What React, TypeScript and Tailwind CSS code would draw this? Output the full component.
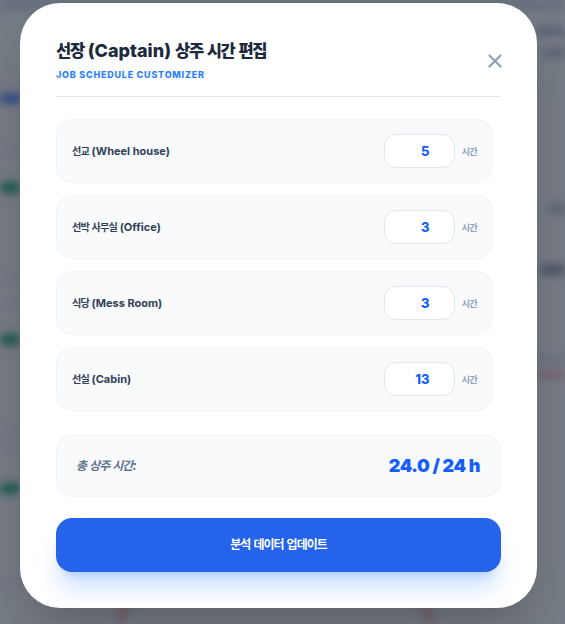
import React from "react";

const HANGUL = /([\uAC00-\uD7A3]+)/;

function Ko({ text }: { text: string }) {
  const parts = text.split(HANGUL);
  return (
    <>
      {parts.map((p, i) =>
        /[\uAC00-\uD7A3]/.test(p) ? (
          <span key={i} className="text-[0.92em] tracking-[-0.08em]">
            {p}
          </span>
        ) : (
          <React.Fragment key={i}>{p}</React.Fragment>
        )
      )}
    </>
  );
}

const rows = [
  { label: "선교 (Wheel house)", value: "5" },
  { label: "선박 사무실 (Office)", value: "3" },
  { label: "식당 (Mess Room)", value: "3" },
  { label: "선실 (Cabin)", value: "13" },
];

function Background() {
  return (
    <div className="h-[624px] w-[565px] overflow-hidden bg-slate-100">
      <div className="flex h-full w-full blur-[5px]">
        <div className="flex w-[30px] flex-col">
          <div className="h-[10px] bg-slate-300" />
          <div className="mt-[85px] h-[7px] w-[22px] rounded bg-blue-600" />
          <div className="mt-[47px] h-px bg-slate-300" />
          <div className="mt-[33px] h-[9px] w-[20px] rounded bg-emerald-600" />
          <div className="mt-[86px] h-px bg-slate-300" />
          <div className="mt-[23px] h-px bg-slate-300" />
          <div className="mt-[32px] h-[9px] w-[20px] rounded bg-emerald-600" />
          <div className="mt-[86px] h-px bg-slate-300" />
          <div className="mt-[17px] h-px bg-slate-300" />
          <div className="mt-[35px] h-[9px] w-[20px] rounded bg-emerald-600" />
          <div className="mt-[88px] h-px bg-slate-300" />
        </div>
        <div className="flex flex-1 flex-col">
          <div className="h-[10px] bg-slate-300" />
          <div className="flex-1" />
          <div className="flex justify-center pr-[18px]">
            <div className="h-[40px] w-[312px] rounded-t-full border-[3px] border-b-0 border-red-400" />
          </div>
        </div>
        <div className="flex w-[28px] flex-col items-end">
          <div className="h-[10px] w-full bg-slate-300" />
          <div className="mt-[18px] h-[6px] w-full bg-slate-400" />
          <div className="mt-[16px] h-[6px] w-[22px] rounded bg-slate-400" />
          <div className="mt-[150px] h-[6px] w-[16px] rounded bg-slate-400" />
          <div className="mt-[54px] h-[7px] w-[24px] rounded bg-slate-500" />
          <div className="mt-[84px] h-[5px] w-full rounded bg-slate-300" />
          <div className="mt-[11px] h-[3px] w-full bg-red-400" />
        </div>
      </div>
    </div>
  );
}

export default function App() {
  return (
    <div className="relative h-[624px] w-[565px] overflow-hidden font-[Inter,'Noto_Sans_CJK_KR',sans-serif]">
      <Background />
      <div className="absolute inset-0 bg-[#111827]/55 pl-[20px] pt-[3px]">
        <div className="w-[517px] rounded-[40px] bg-white p-9 shadow-2xl">
          <div className="flex items-center justify-between border-b border-slate-200 pb-[14px]">
            <div className="flex flex-col">
              <h2 className="text-lg leading-[24px] font-extrabold text-slate-800">
                <Ko text="선장 (Captain) 상주 시간 편집" />
              </h2>
              <p className="mt-[5px] text-[9px] leading-[14px] font-extrabold tracking-[0.085em] text-blue-500">
                JOB SCHEDULE CUSTOMIZER
              </p>
            </div>
            <button className="mr-[-1px] flex h-[14px] w-[14px] items-center justify-center text-slate-400">
              <svg width="14" height="14" viewBox="0 0 14 14" fill="none" stroke="currentColor" strokeWidth="2.3" strokeLinecap="round">
                <path d="M1.5 1.5 L12.5 12.5 M12.5 1.5 L1.5 12.5" />
              </svg>
            </button>
          </div>

          <div className="mt-[22px] flex flex-col gap-3 pr-2">
            {rows.map((r) => (
              <div
                key={r.label}
                className="flex h-[64px] items-center justify-between rounded-2xl border border-slate-100 bg-slate-50 px-[15px]"
              >
                <span className="text-[11px] font-bold text-slate-700">
                  <Ko text={r.label} />
                </span>
                <div className="flex items-center gap-[7px]">
                  <input
                    type="text"
                    inputMode="numeric"
                    defaultValue={r.value}
                    className="h-[34px] w-[71px] rounded-xl border border-slate-200 bg-white pr-6 text-right text-[13px] font-extrabold text-blue-600 outline-none"
                  />
                  <span className="text-[10px] font-bold text-slate-400">
                    <Ko text="시간" />
                  </span>
                </div>
              </div>
            ))}
          </div>

          <div className="mt-[23px] flex h-[63px] items-center justify-between rounded-2xl border border-slate-100 bg-slate-50 pl-[19px] pr-5">
            <span className="text-[13px] font-bold italic text-slate-500">
              <Ko text="총 상주 시간:" />
            </span>
            <span className="text-lg font-black tracking-[-0.025em] text-blue-600">24.0 / 24 h</span>
          </div>

          <button className="mt-[21px] flex h-[54px] w-full items-center justify-center rounded-2xl bg-[#2563eb] text-[13px] font-bold text-white shadow-xl shadow-blue-500/25">
            <span>
              <Ko text="분석 데이터 업데이트" />
            </span>
          </button>
        </div>
      </div>
    </div>
  );
}
